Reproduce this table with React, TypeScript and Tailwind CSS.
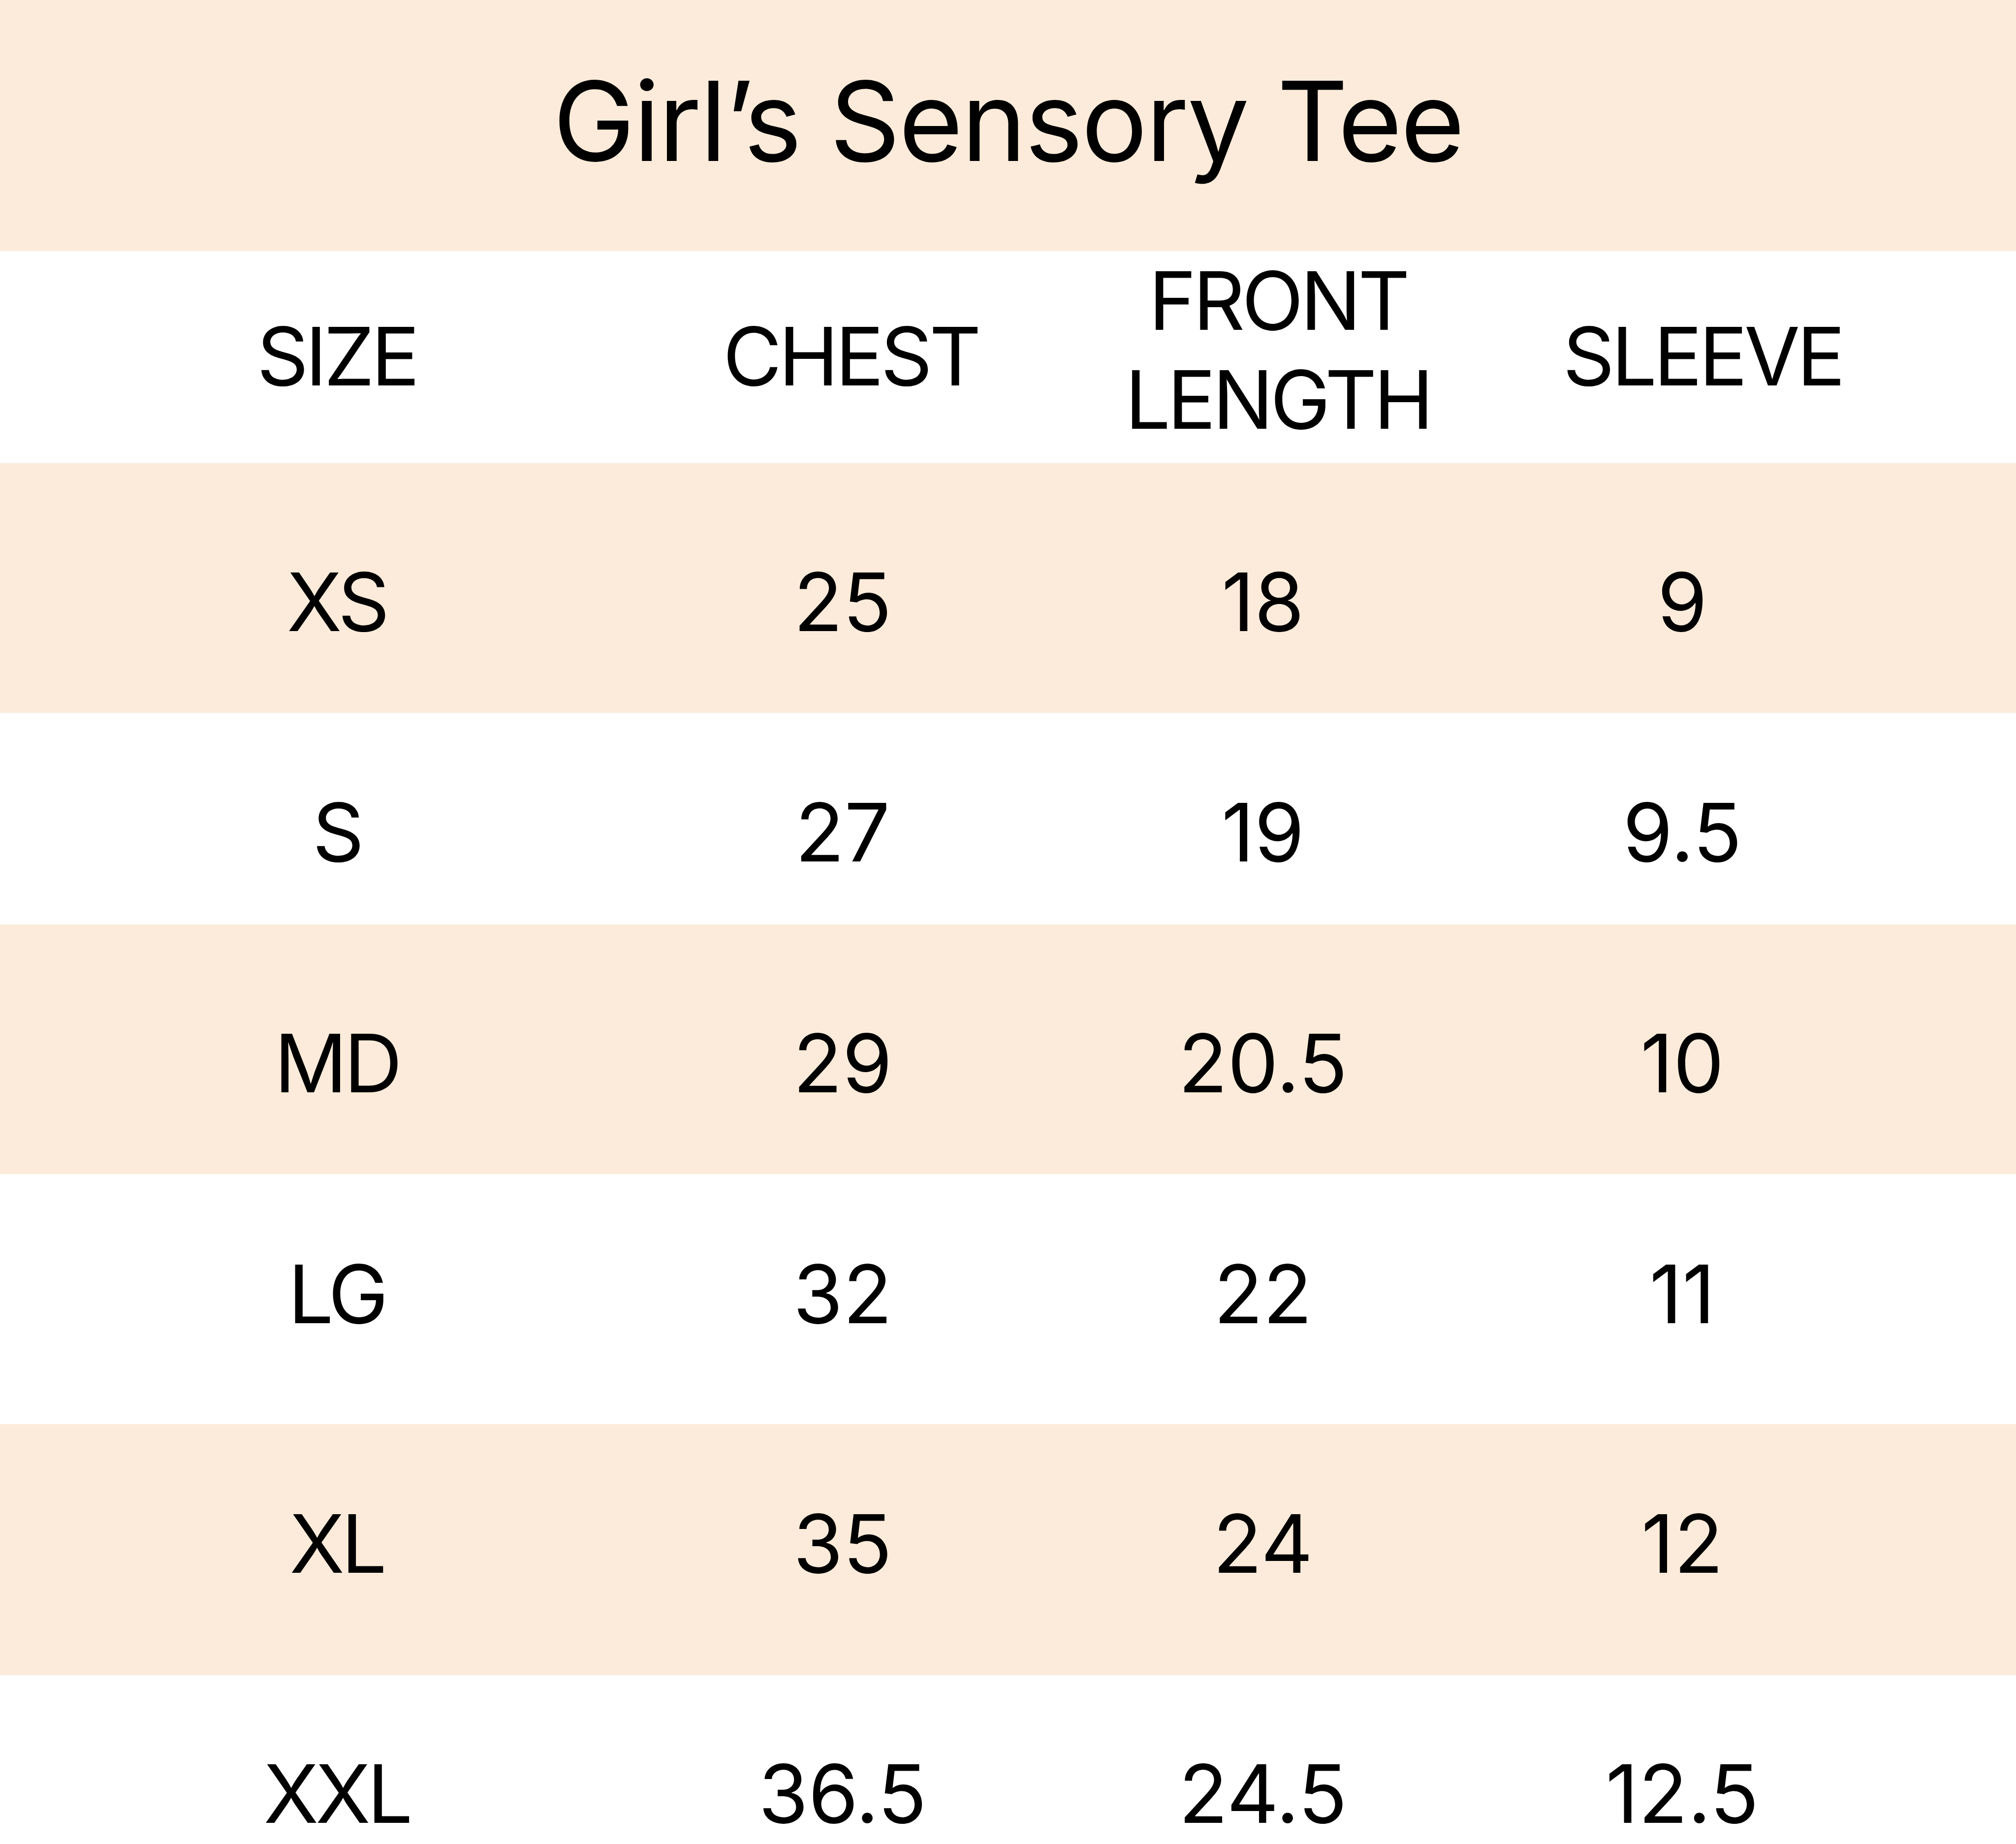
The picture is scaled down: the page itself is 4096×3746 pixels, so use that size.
import React from 'react';

const rows = [
  { size: 'XS', chest: '25', length: '18', sleeve: '9', bg: 'bg-[#fcebda]', h: 'h-[507px] pt-[56px]' },
  { size: 'S', chest: '27', length: '19', sleeve: '9.5', bg: 'bg-white', h: 'h-[430px] pt-[54px]' },
  { size: 'MD', chest: '29', length: '20.5', sleeve: '10', bg: 'bg-[#fcebda]', h: 'h-[507px] pt-[56px]' },
  { size: 'LG', chest: '32', length: '22', sleeve: '11', bg: 'bg-white', h: 'h-[508px] pb-[22px]' },
  { size: 'XL', chest: '35', length: '24', sleeve: '12', bg: 'bg-[#fcebda]', h: 'h-[510px] pb-[26px]' },
  { size: 'XXL', chest: '36.5', length: '24.5', sleeve: '12.5', bg: 'bg-white', h: 'h-[343px] pt-[137px]' },
];

const cols = 'grid grid-cols-[1368px_688px_1020px_684px] items-center text-center';

export default function App() {
  return (
    <div className="w-[4096px] h-[3746px] overflow-hidden bg-white text-black font-['Inter','Liberation_Sans',sans-serif]">
      {/* title band */}
      <div className="h-[510px] bg-[#fcebda] flex items-center justify-center pb-[18px]">
        <h1 className="text-[224px] leading-none font-normal tracking-[-0.015em]">Girl’s Sensory Tee</h1>
      </div>

      {/* column headings */}
      <div className={`${cols} h-[431px] pb-[45px] text-[164px] leading-[201px] tracking-[-0.04em]`}>
        <div className="pt-[24px]">SIZE</div>
        <div className="pt-[24px] pl-[32px]">CHEST</div>
        <div className="pl-[60px]">
          FRONT
          <br />
          LENGTH
        </div>
        <div className="pt-[24px] pl-[82px]">SLEEVE</div>
      </div>

      {rows.map((r) => (
        <div key={r.size} className={`${cols} ${r.bg} ${r.h} text-[164px] leading-[201px]`}>
          <div className="tracking-[-0.04em]">{r.size}</div>
          <div>{r.chest}</div>
          <div>{r.length}</div>
          <div>{r.sleeve}</div>
        </div>
      ))}
    </div>
  );
}
